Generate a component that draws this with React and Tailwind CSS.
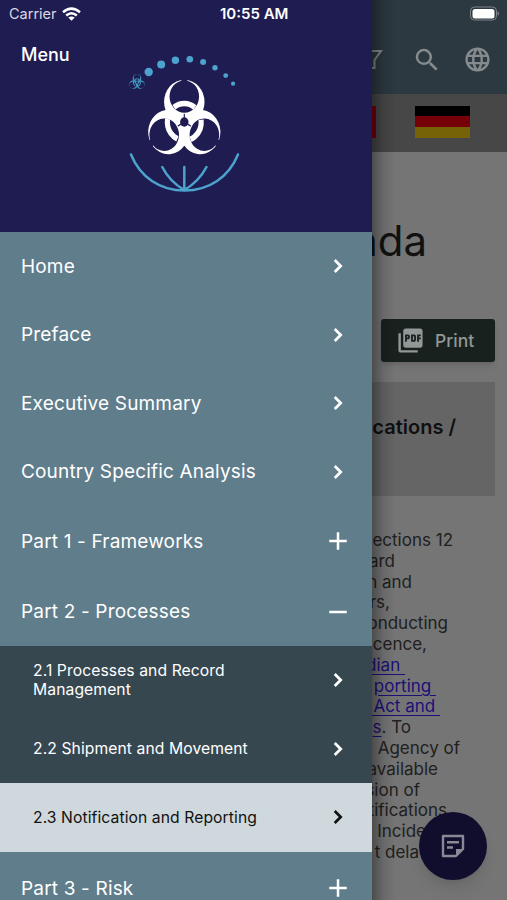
import React from "react";
import { MdAdd, MdLanguage, MdPictureAsPdf, MdRemove, MdSearch } from "react-icons/md";

const mainItems = [
  { name: "Home", height: "h-[68px]" },
  { name: "Preface", height: "h-[69px]" },
  { name: "Executive Summary", height: "h-[68px]" },
  { name: "Country Specific Analysis", height: "h-[69px]" },
];

const subItems = [
  { name: "2.1 Processes and Record Management" },
  { name: "2.2 Shipment and Movement" },
  { name: "2.3 Notification and Reporting", active: true },
];

// Each line is pushed to its own right edge, the rest stays under the drawer
const lines = [
  { text: "ections 12", width: "w-[81px]" },
  { text: "ard", width: "w-[23px]" },
  { text: "n and", width: "w-[40px]" },
  { text: "rs,", width: "w-[18px]" },
  { text: "onducting", width: "w-[76px]" },
  { text: "cence,", width: "w-[55px]" },
  { link: "dian ", width: "w-[33px]" },
  { link: "porting ", width: "w-[64px]" },
  { link: " Act and ", width: "w-[68px]" },
  { link: "s", text: ". To", width: "w-[39px]" },
  { text: "Agency of", width: "w-[88px]" },
  { text: "available", width: "w-[66px]" },
  { text: "sion of", width: "w-[48px]" },
  { text: "tifications", width: "w-[75px]" },
  { text: "Incide", width: "w-[54px]" },
  { text: "t dela", width: "w-[47px]" },
];

const Chevron = () => (
  <svg className="h-7 w-7" viewBox="0 0 28 28" fill="none" stroke="currentColor" strokeWidth="2.700">
    <path d="M10.700 8l6 6-6 6" />
  </svg>
);

const Wifi = () => (
  <svg className="h-[14px] w-[19px]" viewBox="0 0 19 14" fill="none" stroke="#fff" strokeWidth="2.500">
    <path d="M1 5.200Q9.500-2 18 5.200" />
    <path d="M4.200 8.500Q9.500 4 14.800 8.500" />
    <path d="M9.500 13.800L6.300 10.600Q9.500 8.200 12.700 10.600Z" fill="#fff" stroke="none" />
  </svg>
);

const Biohazard = ({ id, ...props }) => (
  <g {...props}>
    <mask id={id} maskUnits="userSpaceOnUse" x="-50" y="-50" width="100" height="100">
      {[0, 120, 240].map((a) => (
        <circle key={a} cy="-19.5" r="21.5" fill="#fff" transform={`rotate(${a})`} />
      ))}
      {[0, 120, 240].map((a) => (
        <g key={a} transform={`rotate(${a})`}>
          <circle cy="-24.7" r="15.7" fill="#000" />
          <rect x="-3.2" y="-44" width="6.4" height="12" fill="#000" />
          <rect x="-0.6" y="-8" width="1.2" height="8" fill="#000" />
        </g>
      ))}
      <circle r="4.5" fill="#000" />
    </mask>
    <rect x="-50" y="-50" width="100" height="100" fill="currentColor" mask={`url(#${id})`} />
    <circle
      r="18"
      fill="none"
      stroke="currentColor"
      strokeWidth="5.5"
      strokeDasharray="23.6 14.1"
      transform="rotate(-127.6)"
    />
  </g>
);

const dots = [
  [148.7, 72, 4.2],
  [161.2, 64.6, 4],
  [175.4, 60.2, 3.7],
  [189.8, 59.2, 3.3],
  [203.1, 62, 3],
  [215, 67.7, 2.7],
  [225.7, 75.6, 2.4],
  [233.1, 83.7, 2.1],
];

const Logo = () => (
  <svg className="h-[160px] w-[150px]" viewBox="110 40 150 160">
    <g fill="#4ca3cd">
      {dots.map(([x, y, r]) => (
        <circle key={x} cx={x} cy={y} r={r} />
      ))}
    </g>
    <Biohazard id="bio-small" className="text-[#4094bd]" transform="translate(137 82.5) scale(0.2)" />
    <Biohazard id="bio-big" className="text-white" transform="translate(184.3 122) scale(0.94 1.03)" />
    <g fill="none" stroke="#4ca3cd" strokeWidth="2.500" strokeLinecap="round">
      <path d="M131 154.500C140 177 160 190.500 184.500 190.500S229 177 238 154.500" />
      <path d="M184.300 167V190M162.200 167Q170 182 184.300 190Q198.500 182 206.500 167" />
    </g>
  </svg>
);

const App = () => {
  return (
    <div className="relative flex h-[900px] w-[507px] overflow-hidden bg-[#757575] font-['Inter','Liberation_Sans',sans-serif]">
      {/* Menu */}
      <aside className="flex w-[372px] shrink-0 flex-col overflow-hidden bg-[#607d8b] text-white">
        <header className="flex h-[232px] shrink-0 flex-col bg-[#1f1c51]">
          <div className="flex h-[27px] items-center gap-[5px] pt-px pl-[9px] text-[14.5px] text-[#d9d8e3]">
            <span>Carrier</span>
            <Wifi />
          </div>
          <div className="flex pt-[13px]">
            <h1 className="w-[110px] pt-[3px] pl-[21px] text-[18px] leading-6 font-medium">Menu</h1>
            <Logo />
          </div>
        </header>

        <nav className="text-[19px] tracking-[0.17px]">
          {mainItems.map((item) => (
            <div key={item.name} className={`${item.height} flex items-center justify-between pr-5 pl-[21px]`}>
              <span className="pt-[2px]">{item.name}</span>
              <Chevron />
            </div>
          ))}
          <div className="flex h-[70px] items-center justify-between pr-[19px] pl-[21px]">
            <span className="pt-[2px]">Part 1 - Frameworks</span>
            <MdAdd className="h-[30px] w-[30px]" />
          </div>
          <div className="flex h-[70px] items-center justify-between pr-[19px] pl-[21px]">
            <span className="pt-[3px]">Part 2 - Processes</span>
            <MdRemove className="mt-px h-[30px] w-[30px]" />
          </div>
          {subItems.map((item) => (
            <div
              key={item.name}
              className={`flex h-[68.5px] items-center justify-between pr-5 pl-[33px] text-[15.7px] leading-[19px] tracking-[0.08px] ${
                item.active ? "bg-[#cfd8dc] text-[#111]" : "bg-[#37474f]"
              }`}>
              <span className="w-[235px]">{item.name}</span>
              <Chevron />
            </div>
          ))}
          <div className="flex h-[72px] items-center justify-between pr-[19px] pl-[21px]">
            <span className="pt-[3px]">Part 3 - Risk</span>
            <MdAdd className="h-[30px] w-[30px]" />
          </div>
        </nav>
      </aside>

      {/* Page */}
      <main className="relative flex w-[135px] shrink-0 flex-col overflow-hidden">
        <div className="flex h-[94px] shrink-0 flex-col bg-[#2c3940] text-[#868b8e]">
          <div className="flex h-[27px] items-center justify-end pr-[7px]">
            <svg className="h-[16px] w-[31px]" viewBox="0 0 31 16">
              <rect x="1.500" y="1" width="26" height="13" rx="4" fill="none" stroke="#7c8488" />
              <rect x="3.500" y="3" width="22" height="9.500" rx="2.500" fill="#fff" />
              <path d="M28.500 5.500c2 .5 2 3.500 0 4z" fill="#7c8488" />
            </svg>
          </div>
          <div className="flex h-[65px] items-center">
            <svg className="h-[22px] w-[12px]" viewBox="0 0 12 22" fill="none" stroke="currentColor" strokeWidth="2">
              <path d="M0 2h9L2.500 11v8H0" />
            </svg>
            <MdSearch className="ml-[28px] h-[30px] w-[30px]" />
            <MdLanguage className="ml-[21px] h-[29px] w-[29px]" />
          </div>
        </div>
        <div className="flex h-[58px] shrink-0 items-center justify-between bg-[#474747] pr-[37px]">
          <div className="mb-[3px] h-8 w-[4px] bg-[#74000c]" />
          <div className="mb-[3px] flex h-8 w-[55px] flex-col">
            <div className="flex-1 bg-black" />
            <div className="flex-1 bg-[#750008]" />
            <div className="flex-1 bg-[#766308]" />
          </div>
        </div>
        <div className="mt-[63px] flex h-[50px] w-[55px] shrink-0 items-center justify-end text-[42px] text-[#111]">
          nda
        </div>
        <div className="mt-[54px] ml-[9px] flex h-[43px] w-[114px] shrink-0 items-center rounded-[3px] bg-[#19211f] pl-[15px] text-[#929797] shadow-md">
          <MdPictureAsPdf className="h-[29px] w-[29px]" />
          <span className="ml-[10px] pt-px text-[17.5px] font-medium">Print</span>
        </div>
        <div className="mt-[20px] flex h-[114px] w-[123px] shrink-0 justify-end bg-[#656565] pt-[30px] pr-[39px] text-[20px] font-semibold whitespace-nowrap text-[#101010]">
          cations /
        </div>
        <div className="mt-[34px] text-[17px] leading-[20.8px] text-[#202020]">
          {lines.map((l) => (
            <p key={l.text + l.link} className={`${l.width} flex justify-end whitespace-pre`}>
              {l.link && <span className="text-[#1c0f78] underline underline-offset-[3px]">{l.link}</span>}
              {l.text}
            </p>
          ))}
        </div>
        <div className="pointer-events-none absolute inset-y-0 left-0 w-6 bg-gradient-to-r from-black/35 via-black/10 to-transparent" />
      </main>

      <span className="absolute top-[3px] left-[220px] text-[15px] font-semibold text-white">10:55 AM</span>

      <button className="absolute top-[812px] left-[419px] flex h-[68px] w-[68px] items-center justify-center rounded-full bg-[#110e2d] text-[#8a8896] shadow-lg">
        <svg className="h-[24px] w-[24px]" viewBox="0 0 24 24" fill="none" stroke="currentColor" strokeWidth="2.400">
          <path d="M2 2h20v13l-7 7H2z" strokeLinejoin="round" />
          <path d="M6 8.300h12M6 13.500h6" />
          <path d="M15 15h7l-7 7z" fill="currentColor" stroke="none" />
        </svg>
      </button>
    </div>
  );
};

export default App;
